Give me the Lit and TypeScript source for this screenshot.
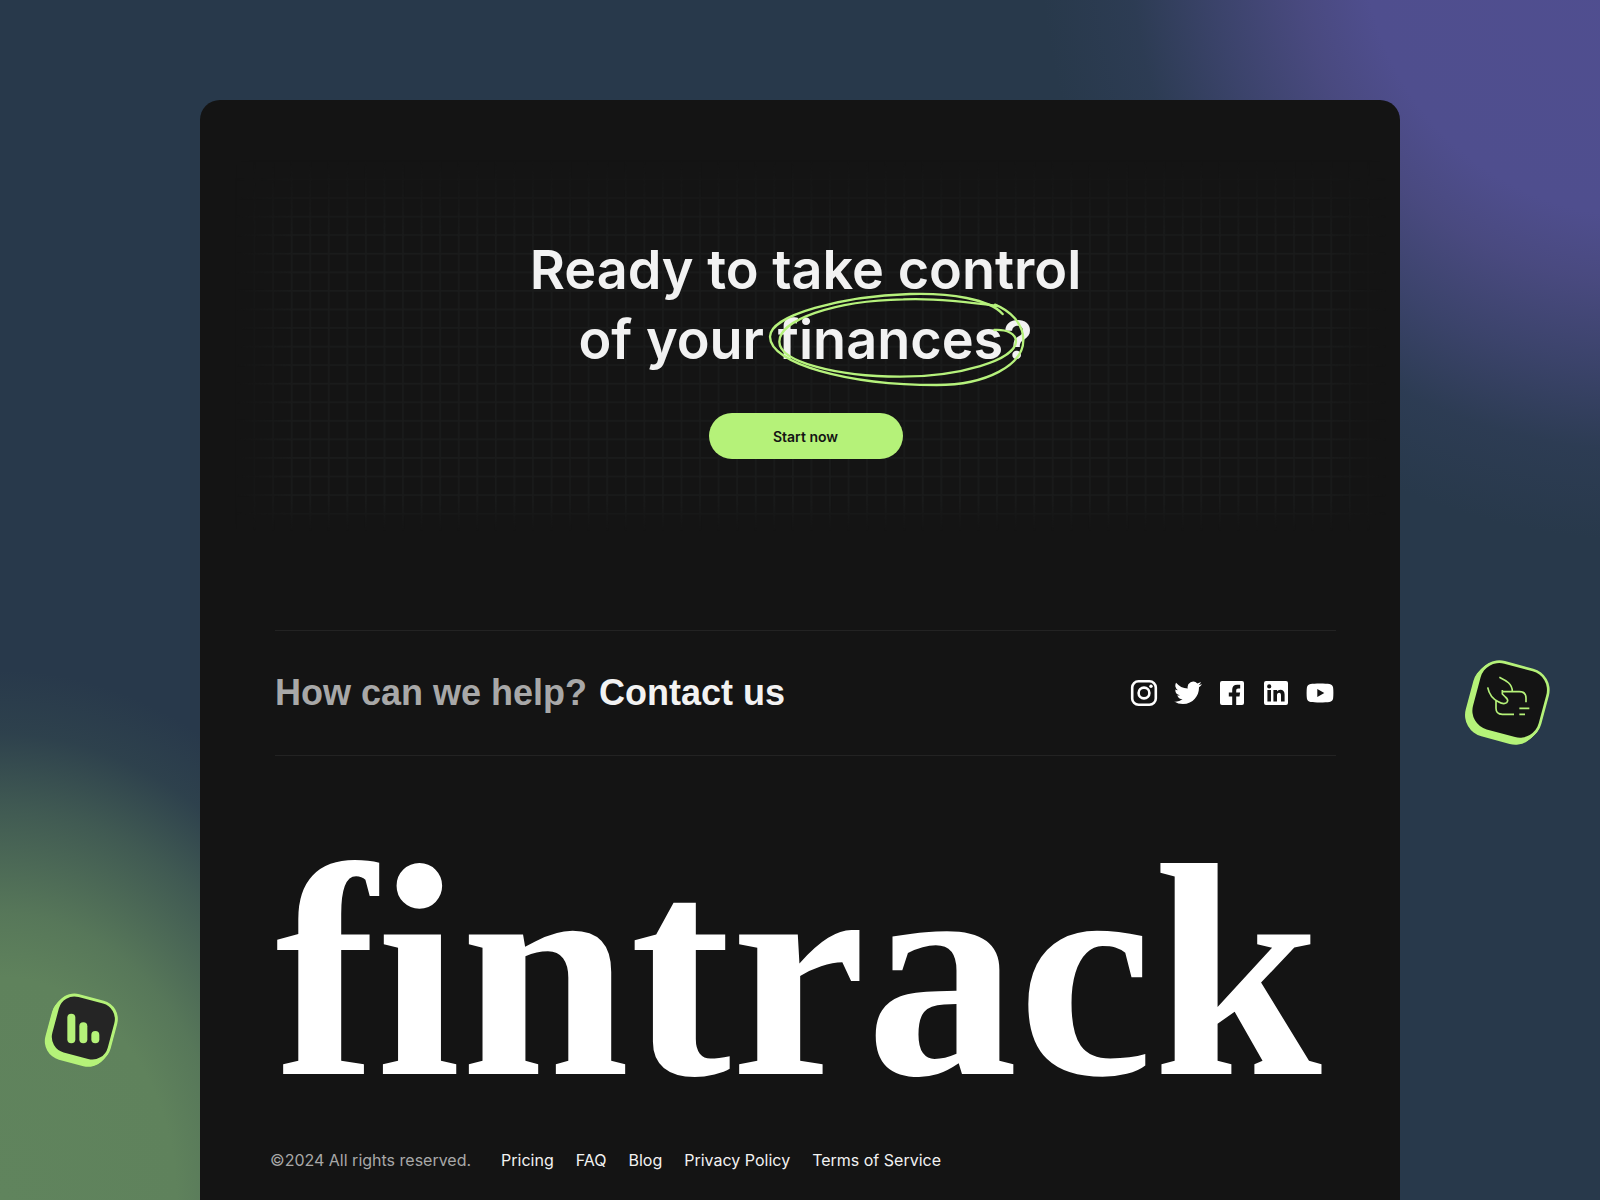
import { LitElement, html, css, svg } from "lit";
import { customElement } from "lit/decorators.js";

const socials = [
  {
    name: "Instagram",
    art: svg`<rect x="2.2" y="2.2" width="23.6" height="23.6" rx="6.4" fill="none" stroke="currentColor" stroke-width="2.6"/>
      <circle cx="14" cy="14" r="5.4" fill="none" stroke="currentColor" stroke-width="2.6"/>
      <circle cx="21" cy="7.2" r="1.7"/>`,
  },
  {
    name: "Twitter",
    art: svg`<path transform="translate(0.2 0.1) scale(1.15)" d="M23.95 4.57a10 10 0 0 1-2.82.77 4.96 4.96 0 0 0 2.16-2.72c-.95.55-2 .96-3.13 1.18a4.92 4.92 0 0 0-8.38 4.48C7.69 8.09 4.07 6.13 1.64 3.16a4.92 4.92 0 0 0 1.52 6.57 4.9 4.9 0 0 1-2.23-.61v.06a4.92 4.92 0 0 0 3.95 4.83 5 5 0 0 1-2.21.08 4.94 4.94 0 0 0 4.6 3.42A9.87 9.87 0 0 1 0 19.54a14 14 0 0 0 7.55 2.21c9.05 0 14-7.5 14-13.98 0-.21 0-.42-.02-.63a9.94 9.94 0 0 0 2.46-2.55z"/>`,
  },
  {
    name: "Facebook",
    art: svg`<path d="M4 2h20a2 2 0 0 1 2 2v20a2 2 0 0 1-2 2h-5.8v-8.6h3.3l.6-3.8h-3.9v-2.2c0-1.3.6-2 2-2h2V5.7h-3c-3.3 0-5 1.9-5 5v2.9h-3.4v3.8h3.4V26H4a2 2 0 0 1-2-2V4a2 2 0 0 1 2-2z"/>`,
  },
  {
    name: "LinkedIn",
    art: svg`<path fill-rule="evenodd" d="M4 2h20a2 2 0 0 1 2 2v20a2 2 0 0 1-2 2H4a2 2 0 0 1-2-2V4a2 2 0 0 1 2-2zM5.4 11v11.4H9V11zM7.2 5.3a2.1 2.1 0 1 0 0 4.2 2.1 2.1 0 0 0 0-4.2zM11.4 11v11.4H15v-6c0-1.6.7-2.6 2.1-2.6s1.9 1 1.9 2.6v6h3.6v-6.8c0-3.2-1.6-4.9-4.2-4.9-1.6 0-2.7.7-3.4 1.8V11z"/>`,
  },
  {
    name: "YouTube",
    art: svg`<path fill-rule="evenodd" d="M14 4.4c4 0 7.600.2 9.400.5 2.300.4 3.400 1.500 3.700 3.500.4 2.700.4 8.300 0 11.200-.3 2-1.400 3.100-3.700 3.500-3.600.600-15.200.600-18.800 0-2.300-.4-3.400-1.500-3.700-3.500-.4-2.900-.4-8.500 0-11.200.3-2 1.400-3.100 3.700-3.500 1.800-.3 5.400-.5 9.400-.5zM11.300 10v8l7-4z"/>`,
  },
];

const links = ["Pricing", "FAQ", "Blog", "Privacy Policy", "Terms of Service"];

@customElement("app-root")
export class AppRoot extends LitElement {
  static styles = css`
    :host {
      display: block;
      font-family: Inter, "Liberation Sans", sans-serif;
      color: #f2f2f2;
    }
    * {
      box-sizing: border-box;
    }
    a {
      color: inherit;
      text-decoration: none;
    }
    .page {
      position: relative;
      min-height: 100vh;
      overflow: hidden;
      padding: 100px 12.5% 0;
      display: flex;
      background:
        radial-gradient(circle 600px at calc(100% + 40px) -60px, #504e90 0%, #4f4e8e 46%, rgba(76, 75, 132, 0.92) 57%, rgba(72, 74, 128, 0.6) 71%, rgba(64, 72, 118, 0.2) 85%, rgba(40, 57, 75, 0) 100%),
        radial-gradient(ellipse 420px 530px at 0% 100%, #60845d 0%, #5f825c 42%, rgba(92, 126, 91, 0.9) 54%, rgba(88, 122, 90, 0.5) 74%, rgba(76, 108, 86, 0.16) 88%, rgba(40, 57, 75, 0) 100%),
        #28394b;
    }
    .card {
      position: relative;
      flex: 1;
      min-width: 0;
      display: flex;
      flex-direction: column;
      padding: 0 64px 24px 75px;
      border-radius: 20px 20px 0 0;
      background: #141414;
    }
    .grid {
      position: absolute;
      left: 35px;
      top: 60px;
      width: calc(100% - 49px);
      aspect-ratio: 62 / 20;
      fill: none;
      stroke: #1a1b1b;
      mask-image: linear-gradient(#0000, #000 20%, #000 92%, #0000), linear-gradient(90deg, #0000, #000 5%, #000 95%, #0000);
      mask-composite: intersect;
    }
    .hero {
      position: relative;
      display: flex;
      flex-direction: column;
      align-items: center;
      gap: 38px;
      padding: 135px 0 171px;
    }
    h1 {
      margin: 0;
      font-size: 54px;
      line-height: 70px;
      font-weight: 600;
      text-align: center;
    }
    .circled {
      position: relative;
    }
    .loop {
      position: absolute;
      left: -18px;
      top: -27px;
      width: 280px;
      height: 120px;
      fill: none;
      stroke: #b6f27c;
      stroke-width: 7;
      stroke-linecap: round;
    }
    .start {
      width: 194px;
      height: 46px;
      border: 0;
      border-radius: 23px;
      background: #b5f279;
      color: #141414;
      font: inherit;
      font-size: 14px;
      font-weight: 600;
      cursor: pointer;
    }
    .help {
      display: flex;
      align-items: center;
      justify-content: space-between;
      height: 126px;
      border: solid #232323;
      border-width: 1px 0;
    }
    h2 {
      margin: 0;
      display: flex;
      gap: 12px;
      font-family: "Liberation Sans", sans-serif;
      font-size: 36px;
      line-height: 44px;
      font-weight: 700;
    }
    .muted {
      color: #a8a8a8;
    }
    .social {
      display: flex;
      gap: 16px;
      padding-right: 2px;
    }
    .social a {
      display: flex;
      color: #fff;
    }
    .social svg {
      width: 28px;
      height: 28px;
      fill: currentColor;
    }
    .wordmark {
      margin: 0;
      padding-top: 86px;
      font-family: "Liberation Serif", serif;
      font-size: 304px;
      line-height: 260px;
      font-weight: 700;
      color: #fff;
      white-space: nowrap;
    }
    .foot {
      display: flex;
      align-items: center;
      gap: 30px;
      margin: 46px 0 0 -5px;
      font-size: 16px;
      line-height: 24px;
    }
    .foot nav {
      display: flex;
      gap: 22px;
    }
    .badge {
      position: absolute;
      fill: #b5f279;
    }
    .badge.bars {
      left: 30px;
      top: 980px;
      width: 110px;
      height: 100px;
    }
    .badge.pay {
      right: 30px;
      top: 640px;
      width: 120px;
      height: 120px;
    }
    .line {
      fill: none;
      stroke: #b5f279;
      stroke-width: 5;
    }
  `;

  /** A tilted tile with a thick lower-left edge. */
  private tile(cx: number, cy: number, side: number, radius: number, ring: number, dx: number, dy: number, face: string) {
    const box = (x: number, y: number, grow: number, fill: string) => svg`<rect
      x=${x - side / 2 - grow} y=${y - side / 2 - grow} width=${side + grow * 2} height=${side + grow * 2}
      rx=${radius + grow} fill=${fill} transform="rotate(15 ${x} ${y})"/>`;
    const steps = [1, 0.8, 0.6, 0.4, 0.2, 0];
    return svg`${steps.map((t) => box(cx + dx * t, cy + dy * t, ring, "#b5f279"))}${box(cx, cy, 0, face)}`;
  }

  render() {
    return html`
      <div class="page">
        <main class="card">
          <svg class="grid" viewBox="0 0 62 20" aria-hidden="true">
            <defs>
              <pattern id="cell" width="1" height="1" patternUnits="userSpaceOnUse">
                <path d="M0 .05H1M.05 0V1" stroke-width="0.09" />
              </pattern>
            </defs>
            <rect width="62" height="20" fill="url(#cell)" stroke="none" />
          </svg>

          <section class="hero">
            <h1>
              Ready to take control<br />of your
              <span class="circled">finances?<svg class="loop" viewBox="0 0 840 360" aria-hidden="true">
                <path d="M728 102C690 58 570 38 450 42C250 48 30 105 30 170C30 250 260 315 530 315C680 315 790 255 790 180C790 130 750 92 705 74" />
                <path d="M712 78C600 62 500 55 430 58C220 62 58 120 58 185C58 245 230 290 420 290C600 290 765 240 768 185C768 160 740 148 703 150" />
              </svg></span>
            </h1>
            <button class="start" type="button">Start now</button>
          </section>

          <section class="help">
            <h2><span class="muted">How can we help?</span><a href="#contact">Contact us</a></h2>
            <div class="social">
              ${socials.map((s) => html`<a href="#${s.name.toLowerCase()}" aria-label=${s.name}><svg viewBox="0 0 28 28" aria-hidden="true">${s.art}</svg></a>`)}
            </div>
          </section>

          <p class="wordmark">fintrack</p>

          <footer class="foot">
            <span class="muted">©2024 All rights reserved.</span>
            <nav>${links.map((l) => html`<a href="#${l.toLowerCase().replace(/ /g, "-")}">${l}</a>`)}</nav>
          </footer>
        </main>

        <svg class="badge bars" viewBox="0 0 330 300" aria-hidden="true">
          ${this.tile(160, 144, 172, 48, 9, -12, 13, "#252525")}
          <rect x="112" y="101" width="24" height="89" rx="12" />
          <rect x="148" y="127" width="24" height="63" rx="12" />
          <rect x="184" y="153" width="24" height="37" rx="12" />
        </svg>

        <svg class="badge pay" viewBox="0 0 360 360" aria-hidden="true">
          ${this.tile(179, 181, 204, 58, 8, -14, 13, "#141414")}
          <path class="line" d="M148 112C164 120 187 129 187 154M113 142C118 166 128 177 145 185C155 191 163 193 170 188C176 182 172 176 166 171L157 162V150M157 155H208C222 155 228 163 228 174V187M138 182V205C138 217 146 223 157 223H192M208 205H238M208 223H225" />
        </svg>
      </div>
    `;
  }
}
